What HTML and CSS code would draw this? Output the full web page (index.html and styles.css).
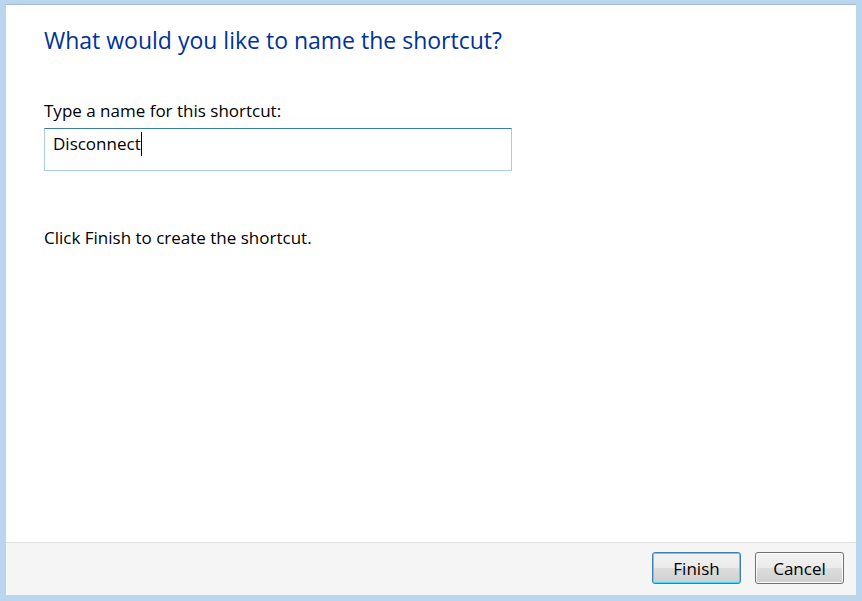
FILE: index.html
```html
<!DOCTYPE html>
<html>
<head>
<meta charset="utf-8">
<link rel="stylesheet" href="styles.css">
</head>
<body>
<div class="frame">
  <div class="window">
    <div class="content">
      <h1 class="title">What would you like to name the shortcut?</h1>
      <label class="label">Type a name for this shortcut:</label>
      <div class="input"><span class="value">Disconnect</span><span class="caret"></span></div>
      <p class="hint">Click Finish to create the shortcut.</p>
    </div>
    <div class="footer">
      <button class="btn btn-default">Finish</button>
      <button class="btn">Cancel</button>
    </div>
  </div>
</div>
</body>
</html>
```

FILE: styles.css
```css
html, body {
  margin: 0;
  padding: 0;
  width: 862px;
  height: 601px;
  overflow: hidden;
}
body {
  font-family: "Open Sans", "Noto Sans", sans-serif;
  color: #000;
}
.frame {
  width: 862px;
  height: 601px;
  box-sizing: border-box;
  background: #bcd5ef;
  padding: 4px 6px 6px 6px;
  display: flex;
}
.window {
  flex: 1;
  display: flex;
  flex-direction: column;
  background: #fff;
  border-top: 1px solid #a3bdd9;
}
.content {
  flex: 1;
  padding: 20px 0 0 38px;
}
.title {
  margin: 0;
  font-weight: normal;
  font-size: 23px;
  line-height: 30px;
  color: #003399;
}
.label {
  display: block;
  margin-top: 45px;
  font-size: 17px;
  line-height: 22px;
}
.input {
  margin-top: 6px;
  width: 458px;
  height: 41px;
  border: 1px solid #abcbe5;
  border-top-color: #3d7bad;
  display: flex;
  align-items: flex-start;
  padding-left: 8px;
  box-sizing: content-box;
  font-size: 17px;
}
.input .value {
  line-height: 22px;
  margin-top: 4px;
}
.caret {
  display: inline-block;
  width: 1px;
  height: 24px;
  background: #000;
  margin-top: 3px;
}
.hint {
  margin: 56px 0 0 0;
  font-size: 17px;
  line-height: 22px;
}
.footer {
  height: 53px;
  background: #f5f5f5;
  border-top: 1px solid #dfdfdf;
  display: flex;
  justify-content: flex-end;
  align-items: flex-start;
  gap: 14px;
  padding: 9px 12px 0 0;
  box-sizing: border-box;
}
.btn {
  width: 89px;
  height: 32px;
  border: 1px solid #707070;
  border-radius: 3px;
  background: linear-gradient(#f2f2f2 0%, #ebebeb 49%, #dddddd 50%, #cfcfcf 100%);
  font-family: inherit;
  font-size: 17px;
  color: #000;
  padding: 0;
  box-shadow: inset 0 0 0 1px #fcfcfc;
}
.btn-default {
  border-color: #3c7fb1;
  box-shadow: inset 0 0 0 1px #48d8fd;
}
```
